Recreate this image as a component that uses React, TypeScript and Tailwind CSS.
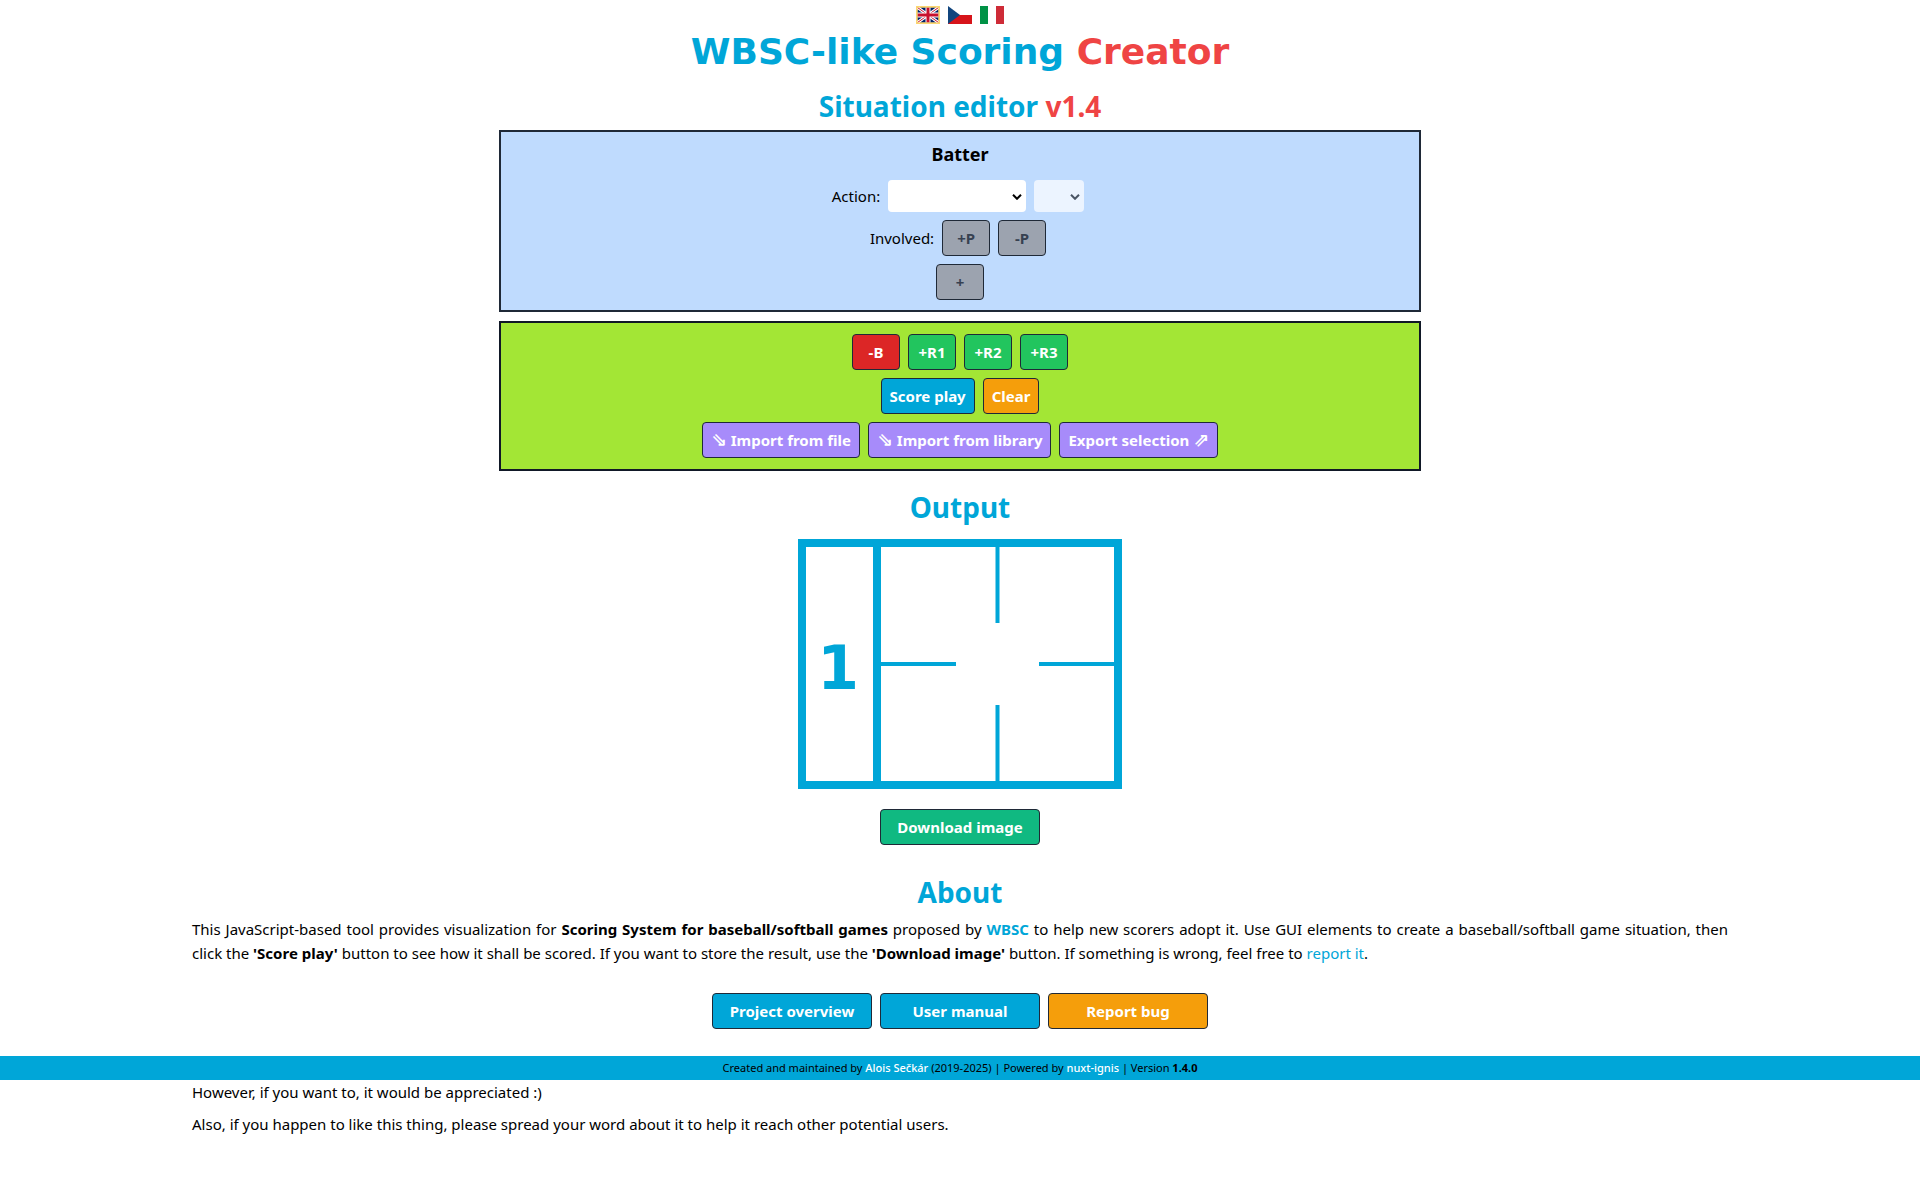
import type { ReactNode } from 'react';

function FlagGB() {
  return (
    <svg viewBox="0 0 24 18" className="h-[18px] w-6" aria-hidden="true">
      <rect width="24" height="18" fill="#fcd770" />
      <rect x="1.5" y="1.5" width="21" height="15" fill="#012169" />
      <path d="M1.5 1.5 L22.5 16.5 M22.5 1.5 L1.5 16.5" stroke="#fff" strokeWidth="3" />
      <path d="M1.5 1.5 L22.5 16.5 M22.5 1.5 L1.5 16.5" stroke="#c8102e" strokeWidth="1" />
      <path d="M12 1.5 V16.5 M1.5 9 H22.5" stroke="#fff" strokeWidth="5" />
      <path d="M12 1.5 V16.5 M1.5 9 H22.5" stroke="#c8102e" strokeWidth="3" />
      <rect x="0.75" y="0.75" width="22.5" height="16.5" fill="none" stroke="#fcd770" strokeWidth="1.5" />
    </svg>
  );
}

function FlagCZ() {
  return (
    <svg viewBox="0 0 24 18" className="h-[18px] w-6" aria-hidden="true">
      <rect width="24" height="9" fill="#fff" />
      <rect y="9" width="24" height="9" fill="#d7141a" />
      <path d="M0 0 L12 9 L0 18 Z" fill="#11457e" />
    </svg>
  );
}

function FlagIT() {
  return (
    <svg viewBox="0 0 24 18" className="h-[18px] w-6" aria-hidden="true">
      <rect width="8" height="18" fill="#009246" />
      <rect x="8" width="8" height="18" fill="#fff" />
      <rect x="16" width="8" height="18" fill="#ce2b37" />
    </svg>
  );
}

function Button({ className, disabled, children }: { className: string; disabled?: boolean; children: ReactNode }) {
  return (
    <button
      type="button"
      disabled={disabled}
      className={`h-9 rounded border border-[#1f2937] text-[15px] leading-6 font-bold whitespace-nowrap ${className}`}
    >
      {children}
    </button>
  );
}

function Arrow({ children }: { children: ReactNode }) {
  return <span className="font-['DejaVu_Sans',sans-serif] text-[19px] leading-none">{children}</span>;
}

function Chevron() {
  return (
    <svg viewBox="0 0 10 6" className="pointer-events-none absolute top-[14px] right-1 h-[6px] w-[10px]" aria-hidden="true">
      <path d="M1 0.8 L5 4.8 L9 0.8" fill="none" stroke="currentColor" strokeWidth="2" />
    </svg>
  );
}

function Heading({ className, children }: { className: string; children: ReactNode }) {
  return <h2 className={`text-center text-[28px] leading-9 font-bold text-[#00a6d8] ${className}`}>{children}</h2>;
}

function ScoreBox() {
  return (
    <svg viewBox="0 0 324 250" className="mx-auto mt-[14px] block h-[250px] w-[324px]" role="img" aria-label="Scoring output">
      <g fill="none" stroke="#00a6d8">
        <rect x="4" y="4" width="316" height="242" strokeWidth="8" />
        <path d="M79 4 V246" strokeWidth="8" />
        <path d="M199.500 8 V84 M199.500 166 V242 M82 125 H158 M241 125 H316" strokeWidth="4" />
      </g>
      <text x="40" y="150" textAnchor="middle" fill="#00a6d8" className="font-['DejaVu_Sans',sans-serif] text-[60px] font-bold">
        1
      </text>
    </svg>
  );
}

export default function App() {
  return (
    <div className="bg-white pb-14 font-['Noto_Sans','Open_Sans',sans-serif] text-[15px] leading-6 text-black">
      <nav className="flex justify-center gap-2 pt-[6px]">
        <a href="#en" aria-label="English"><FlagGB /></a>
        <a href="#cs" aria-label="Čeština"><FlagCZ /></a>
        <a href="#it" aria-label="Italiano"><FlagIT /></a>
      </nav>

      <main className="mx-auto w-4/5">
        <h1 className="mt-2 text-center font-['DejaVu_Sans',sans-serif] text-4xl leading-10 font-bold text-[#00a6d8]">
          WBSC-like Scoring <span className="text-[#ef4444]">Creator</span>
        </h1>

        <Heading className="mt-4">
          Situation editor <span className="text-[#ef4444]">v1.4</span>
        </Heading>

        <section className="mx-auto mt-[6px] w-3/5 border-2 border-[#1f2937] bg-[#bfdbfe] pt-2 pb-[10px]">
          <h3 className="text-center text-lg leading-7 font-bold">Batter</h3>
          <div className="mt-3 flex items-center justify-center gap-2 pr-1">
            <label htmlFor="action">Action:</label>
            <span className="relative">
              <select id="action" className="block h-8 w-[138px] appearance-none rounded bg-white" />
              <Chevron />
            </span>
            <span className="relative text-gray-600">
              <select aria-label="Base" disabled className="block h-8 w-[50px] appearance-none rounded bg-[#ecf4ff]" />
              <Chevron />
            </span>
          </div>
          <div className="mt-2 flex items-center justify-center gap-2 pr-1">
            <span>Involved:</span>
            <Button disabled className="w-12 bg-[#9ca3af] text-[#374151]">+P</Button>
            <Button disabled className="w-12 bg-[#9ca3af] text-[#374151]">-P</Button>
          </div>
          <div className="mt-2 flex justify-center">
            <Button disabled className="w-12 bg-[#9ca3af] text-[#374151]">+</Button>
          </div>
        </section>

        <section className="mx-auto mt-[9px] flex w-3/5 flex-col gap-2 border-2 border-[#111827] bg-[#a3e635] py-[11px] text-white">
          <div className="flex justify-center gap-2">
            <Button className="w-12 bg-[#dc2626]">-B</Button>
            <Button className="w-12 bg-[#22c55e]">+R1</Button>
            <Button className="w-12 bg-[#22c55e]">+R2</Button>
            <Button className="w-12 bg-[#22c55e]">+R3</Button>
          </div>
          <div className="flex justify-center gap-2">
            <Button className="bg-[#00a6d8] px-2">Score play</Button>
            <Button className="bg-[#f59e0b] px-2">Clear</Button>
          </div>
          <div className="flex justify-center gap-2">
            <Button className="bg-[#a78bfa] px-2"><Arrow>⇘</Arrow> Import from file</Button>
            <Button className="bg-[#a78bfa] px-2"><Arrow>⇘</Arrow> Import from library</Button>
            <Button className="bg-[#a78bfa] px-2">Export selection <Arrow>⇗</Arrow></Button>
          </div>
        </section>

        <Heading className="mt-[18px]">Output</Heading>
        <ScoreBox />
        <div className="mt-5 flex justify-center">
          <Button className="w-40 bg-[#10b981] text-white">Download image</Button>
        </div>

        <Heading className="mt-[29px]">About</Heading>
        <p className="mt-[7px] text-justify">
          This JavaScript-based tool provides visualization for <b>Scoring System for baseball/softball games</b> proposed by{' '}
          <a href="#wbsc" className="font-bold text-[#00a6d8]">WBSC</a> to help new scorers adopt it. Use GUI elements to
          create a baseball/softball game situation, then click the <b>'Score play'</b> button to see how it shall be scored. If
          you want to store the result, use the <b>'Download image'</b> button. If something is wrong, feel free to{' '}
          <a href="#report" className="text-[#00a6d8]">report it</a>.
        </p>
        <div className="mt-7 flex justify-center gap-2 text-white">
          <Button className="w-40 bg-[#00a6d8]">Project overview</Button>
          <Button className="w-40 bg-[#00a6d8]">User manual</Button>
          <Button className="w-40 bg-[#f59e0b]">Report bug</Button>
        </div>
      </main>

      <footer className="mt-[27px] bg-[#00a6d8] text-center text-[11px] leading-6">
        Created and maintained by <a href="#author" className="font-medium text-white">Alois Sečkár</a> (2019-2025) | Powered by{' '}
        <a href="#ignis" className="font-medium text-white">nuxt-ignis</a> | Version <b>1.4.0</b>
      </footer>

      <div className="mx-auto flex w-4/5 flex-col gap-2">
        <p>However, if you want to, it would be appreciated :)</p>
        <p>Also, if you happen to like this thing, please spread your word about it to help it reach other potential users.</p>
      </div>
    </div>
  );
}
